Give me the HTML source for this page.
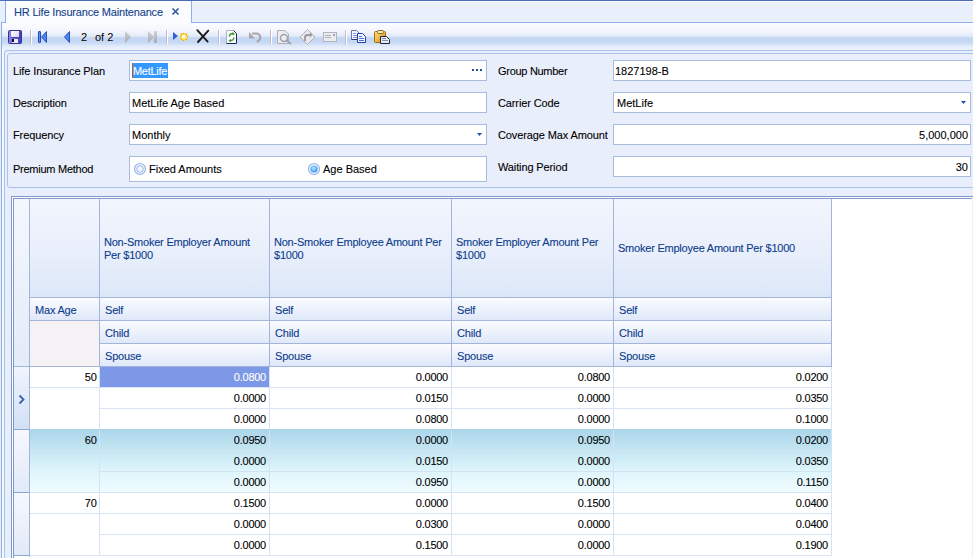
<!DOCTYPE html>
<html><head><meta charset="utf-8">
<style>
*{box-sizing:border-box;margin:0;padding:0}
html,body{width:973px;height:558px;overflow:hidden;background:#e6edfa;font-family:"Liberation Sans",sans-serif;font-size:11px;color:#000;position:relative}
.a{position:absolute}
.t{position:absolute;white-space:nowrap;line-height:13px;-webkit-text-stroke-width:0.1px}
.lb{letter-spacing:-0.12px}
.hl{position:absolute;height:1px}
.vl{position:absolute;width:1px}
.tb{position:absolute;background:#fff;border:1px solid #a9bbdd}
</style></head><body>
<!-- top dark line -->
<div class="hl" style="left:0;top:0;width:973px;height:1px;background:#4a6cb8"></div>
<!-- tab strip bg -->
<div class="a" style="left:0;top:1px;width:973px;height:21px;background:#eaeffc"></div>
<div class="hl" style="left:0;top:1px;width:973px;background:#f8faff"></div>
<div class="hl" style="left:1px;top:22px;width:972px;background:#8cb0ea"></div>
<!-- tab -->
<div class="a" style="left:5px;top:1px;width:187px;height:22px;background:#fbfcff;border-left:1px solid #8cb0ea;border-right:1px solid #8cb0ea"></div>
<div class="t" style="left:14px;top:6px;color:#15428b;letter-spacing:-0.18px">HR Life Insurance Maintenance</div>
<svg class="a" style="left:171px;top:7px" width="10" height="9"><path d="M1.5 1.5 L7.5 7.5 M7.5 1.5 L1.5 7.5" stroke="#2d55a8" stroke-width="1.6"/></svg>
<!-- content left border -->
<div class="vl" style="left:1px;top:22px;height:536px;background:#8cb0ea"></div>
<div class="a" style="left:2px;top:23px;width:971px;height:535px;background:#e8eefb"></div>
<div class="a" style="left:2px;top:50px;width:2px;height:508px;background:#f6f9ff"></div>
<!-- toolbar -->
<div class="a" style="left:2px;top:23px;width:971px;height:27px;background:linear-gradient(#fcfdff 0px,#f4f7fd 7px,#e4ebf8 13px,#c2d5f3 15px,#c8daf5 20px,#e2ebfa 23px,#eef3fd 27px)"></div>
<!-- toolbar icons -->
<svg class="a" style="left:0;top:0" width="400" height="50" viewBox="0 0 400 50">
<defs>
<linearGradient id="gblue" x1="0" y1="0" x2="0" y2="1"><stop offset="0" stop-color="#6aa0f5"/><stop offset="1" stop-color="#1f4fc0"/></linearGradient>
<linearGradient id="ggray" x1="0" y1="0" x2="0" y2="1"><stop offset="0" stop-color="#d0d0d6"/><stop offset="1" stop-color="#a9a9b2"/></linearGradient>
<linearGradient id="gfl" x1="0" y1="0" x2="1" y2="1"><stop offset="0" stop-color="#fff"/><stop offset="1" stop-color="#d8d0f0"/></linearGradient>
<linearGradient id="gpaste" x1="0" y1="0" x2="1" y2="1"><stop offset="0" stop-color="#ffe680"/><stop offset="1" stop-color="#d08a10"/></linearGradient>
</defs>
<!-- save -->
<linearGradient id="gsave" x1="0" y1="0" x2="1" y2="0"><stop offset="0" stop-color="#8c86e8"/><stop offset="1" stop-color="#3c3cb0"/></linearGradient>
<rect x="8.5" y="30.5" width="13" height="13" rx="1" fill="url(#gsave)" stroke="#34339a"/>
<rect x="11" y="31" width="8" height="6" fill="url(#gfl)"/>
<rect x="11" y="37" width="8" height="1" fill="#4a48b8"/>
<rect x="12" y="39" width="6" height="4" fill="#e8e8f8"/>
<rect x="12" y="39" width="2" height="3" fill="#111"/>
<!-- separators -->
<g fill="#c6b9c9"><rect x="30" y="30" width="1" height="15"/><rect x="166" y="30" width="1" height="15"/><rect x="218" y="30" width="1" height="15"/><rect x="270" y="30" width="1" height="15"/><rect x="345" y="30" width="1" height="15"/></g>
<g fill="#ffffff"><rect x="31" y="30" width="1" height="15"/><rect x="167" y="30" width="1" height="15"/><rect x="219" y="30" width="1" height="15"/><rect x="271" y="30" width="1" height="15"/><rect x="346" y="30" width="1" height="15"/></g>
<!-- first -->
<rect x="38.5" y="31.5" width="2" height="11" rx="0.5" fill="#5d93f0" stroke="#1f48b8"/>
<polygon points="46.5,31.5 41.5,37 46.5,42.5" fill="#4a86ee" stroke="#1f48b8" stroke-width="0.9"/>
<!-- prev -->
<polygon points="69.5,31.5 64.5,37 69.5,42.5" fill="#4a86ee" stroke="#1f48b8" stroke-width="0.9"/>
<!-- next -->
<polygon points="125,31 131,37 125,43" fill="url(#ggray)"/>
<!-- last -->
<polygon points="148,31 154,37 148,43" fill="url(#ggray)"/>
<rect x="154" y="31" width="3" height="12" rx="1" fill="url(#ggray)"/>
<!-- new -->
<polygon points="173,32 178,36 173,40" fill="#2f62d8"/>
<rect x="180" y="33" width="7.5" height="7.5" rx="2" fill="#f6d84a"/>
<circle cx="183.7" cy="36.7" r="2" fill="#fffbe0"/>
<g fill="#e89a20"><rect x="181" y="34" width="1" height="1"/><rect x="186" y="34" width="1" height="1"/><rect x="181" y="39" width="1" height="1"/><rect x="186" y="39" width="1" height="1"/><rect x="183" y="33" width="1" height="1"/><rect x="180" y="36" width="1" height="1"/><rect x="187" y="36" width="1" height="1"/><rect x="183" y="40" width="1" height="1"/></g>
<!-- delete X -->
<path d="M197.3 30.2 L207.6 41.6 M208.3 30.6 L198 42" stroke="#1a1a1a" stroke-width="1.9" stroke-linecap="round"/>
<!-- refresh doc -->
<path d="M226.5 30.5 H233.5 L236.5 33.5 V43.5 H226.5 Z" fill="#fbfbff"/>
<path d="M226.5 43.5 V30.5 H233.5" stroke="#aab2c6" fill="none"/>
<path d="M233.5 30.5 L236.5 33.5 V43.5 H226.5" stroke="#23264a" fill="none"/>
<path d="M229.2 36.5 Q230 33.2 233.5 33.6" stroke="#3c9a28" stroke-width="1.4" fill="none"/>
<polygon points="232.5,32 235,34 232.5,35.5" fill="#3c9a28"/>
<path d="M234 37.5 Q233.5 40.8 230 40.6" stroke="#3c9a28" stroke-width="1.4" fill="none"/>
<polygon points="231,39 228.5,40.6 231,42.2" fill="#3c9a28"/>
<!-- undo gray -->
<path d="M252 33.5 H256 A3.6 3.6 0 0 1 256.5 41.5" stroke="#aaa4ae" stroke-width="2.2" fill="none"/>
<polygon points="249,32 249,38.5 255,38.5" fill="#aaa4ae"/>
<!-- preview gray -->
<path d="M277.5 30.5 H285 L288.5 34 V43.5 H277.5 Z" fill="#ececf0" stroke="#b0b0b8"/>
<circle cx="284" cy="38" r="3.5" fill="none" stroke="#a0a0aa" stroke-width="1.5"/>
<path d="M286.5 40.5 L291 44" stroke="#a0a0aa" stroke-width="2"/>
<!-- diamond gray -->
<polygon points="307.5,29.5 315,37 307.5,44.5 300,37" fill="#e8e8ec" stroke="#b2b2ba"/>
<path d="M305 41 V37.5 A2.5 2.5 0 0 1 307.5 35 H310" stroke="#9a9aa4" stroke-width="1.8" fill="none"/>
<polygon points="310,32.5 312.5,35 310,37.5" fill="#9a9aa4"/>
<!-- card gray -->
<rect x="323.5" y="32.5" width="13" height="9" fill="#ebebef" stroke="#b4b4bc"/>
<rect x="325" y="35" width="6" height="1" fill="#b0b0b8"/><rect x="325" y="37" width="6" height="1" fill="#b0b0b8"/>
<rect x="333" y="34" width="2" height="2" fill="#b89aa8"/>
<!-- copy -->
<path d="M351.5 30.5 H356.5 L359 33 V39.5 H351.5 Z" fill="#f6f8ff" stroke="#6a7aa8"/>
<path d="M351.5 39.5 H359" stroke="#2a3470"/>
<g fill="#7e9ae0"><rect x="353" y="33" width="3" height="1"/><rect x="353" y="35" width="5" height="1"/><rect x="353" y="37" width="5" height="1"/></g>
<path d="M357.5 33.5 H362.5 L365.5 36.5 V42.5 H357.5 Z" fill="#f4f6ff" stroke="#2240b0"/>
<g fill="#4a72d8"><rect x="359" y="36" width="3" height="1"/><rect x="359" y="38" width="5" height="1"/><rect x="359" y="40" width="5" height="1"/></g>
<!-- paste -->
<rect x="374.5" y="31.5" width="11" height="11" rx="1" fill="url(#gpaste)" stroke="#a07010"/>
<rect x="377.5" y="30.5" width="6" height="3" rx="1" fill="#f8eab0" stroke="#80581a" stroke-width="0.9"/>
<path d="M380.5 36.5 H386.5 L389.5 39.5 V43.5 H380.5 Z" fill="#e8eaf2" stroke="#262636"/>
<g fill="#8090b8"><rect x="382" y="38" width="4" height="1"/><rect x="382" y="40" width="6" height="1"/></g>
</svg>
<div class="t" style="left:81px;top:31px;-webkit-text-stroke-width:0">2</div>
<div class="t" style="left:95px;top:31px;-webkit-text-stroke-width:0">of 2</div>

<!-- outer panel -->
<div class="a" style="left:4px;top:50px;width:980px;height:520px;border:1px solid #a9c1ea;border-radius:3px;background:#e8eefb"></div>
<!-- inner form panel -->
<div class="a" style="left:7px;top:53px;width:980px;height:135px;border:1px solid #a9c1ea;border-radius:3px;background:#e9eefb"></div>

<!-- form labels -->
<div class="t lb" style="left:13px;top:65px">Life Insurance Plan</div>
<div class="t lb" style="left:13px;top:97px">Description</div>
<div class="t lb" style="left:13px;top:129px">Frequency</div>
<div class="t" style="left:13px;top:163px;letter-spacing:-0.26px">Premium Method</div>
<div class="t" style="left:498px;top:65px;letter-spacing:-0.29px">Group Number</div>
<div class="t lb" style="left:498px;top:97px">Carrier Code</div>
<div class="t lb" style="left:498px;top:129px">Coverage Max Amount</div>
<div class="t lb" style="left:498px;top:161px">Waiting Period</div>

<!-- textboxes -->
<div class="tb" style="left:129px;top:60px;width:358px;height:21px"></div>
<div class="a" style="left:132px;top:63px;width:36px;height:15px;background:#3399ff"></div>
<div class="t" style="left:133px;top:65px;color:#fff;letter-spacing:-0.3px">MetLife</div>
<div class="a" style="left:132px;top:63px;width:1px;height:15px;background:#c8502a"></div>
<div class="a" style="left:472px;top:69px;width:2px;height:2px;background:#1f4fa8"></div><div class="a" style="left:476px;top:69px;width:2px;height:2px;background:#1f4fa8"></div><div class="a" style="left:480px;top:69px;width:2px;height:2px;background:#1f4fa8"></div>
<div class="tb" style="left:129px;top:92px;width:358px;height:21px"></div>
<div class="t" style="left:132px;top:97px">MetLife Age Based</div>
<div class="tb" style="left:129px;top:124px;width:358px;height:21px"></div>
<div class="t" style="left:132px;top:129px">Monthly</div>
<svg class="a" style="left:477px;top:133px" width="6" height="4"><polygon points="0,0 5,0 2.5,3" fill="#1f4fa8"/></svg>
<div class="tb" style="left:129px;top:156px;width:358px;height:26px"></div>
<svg class="a" style="left:133px;top:162px" width="14" height="14"><circle cx="7" cy="7" r="5.5" fill="#f4f4ff" stroke="#8fb2ec" stroke-width="1.2"/><circle cx="7" cy="7" r="3.3" fill="none" stroke="#9ab9ee" stroke-width="1"/></svg>
<svg class="a" style="left:307px;top:162px" width="14" height="14"><defs><radialGradient id="rg" cx="0.45" cy="0.4" r="0.6"><stop offset="0" stop-color="#b8ecff"/><stop offset="1" stop-color="#2f8ff0"/></radialGradient></defs><circle cx="7" cy="7" r="5.5" fill="#eef4ff" stroke="#8fb2ec" stroke-width="1.2"/><circle cx="7" cy="7" r="3.6" fill="url(#rg)"/></svg>
<div class="t" style="left:149px;top:163px">Fixed Amounts</div>
<div class="t" style="left:323px;top:163px">Age Based</div>

<div class="tb" style="left:613px;top:60px;width:358px;height:21px"></div>
<div class="t" style="left:615px;top:65px">1827198-B</div>
<div class="tb" style="left:613px;top:92px;width:358px;height:21px"></div>
<div class="t" style="left:617px;top:97px">MetLife</div>
<svg class="a" style="left:961px;top:101px" width="6" height="4"><polygon points="0,0 5,0 2.5,3" fill="#1f4fa8"/></svg>
<div class="tb" style="left:613px;top:124px;width:358px;height:21px"></div>
<div class="t" style="left:880px;top:129px;width:88px;text-align:right">5,000,000</div>
<div class="tb" style="left:613px;top:156px;width:358px;height:21px"></div>
<div class="t" style="left:880px;top:161px;width:88px;text-align:right">30</div>

<!-- grid -->
<div class="a" style="left:11px;top:196px;width:980px;height:380px;border:1px solid #7f9ac8;background:#fff"></div>
<div class="a" style="left:13px;top:198px;width:980px;height:380px;border-left:1px solid #7f9ac8;border-top:1px solid #7f9ac8"></div>
<div class="a" style="left:14px;top:199px;width:15px;height:168px;background:linear-gradient(#f4f7fd,#e4ebf9)"></div>
<div class="vl" style="left:29px;top:199px;height:358px;background:#a3b6da"></div>
<div class="a" style="left:30px;top:199px;width:69px;height:98px;background:linear-gradient(#f2f5fd,#e9effb 55%,#dbe7f8)"></div>
<div class="vl" style="left:99px;top:199px;height:168px;background:#a3b6da"></div>
<div class="a" style="left:100px;top:199px;width:169px;height:98px;background:linear-gradient(#f2f5fd,#e9effb 55%,#dbe7f8)"></div>
<div class="vl" style="left:269px;top:199px;height:168px;background:#a3b6da"></div>
<div class="a" style="left:270px;top:199px;width:181px;height:98px;background:linear-gradient(#f2f5fd,#e9effb 55%,#dbe7f8)"></div>
<div class="vl" style="left:451px;top:199px;height:168px;background:#a3b6da"></div>
<div class="a" style="left:452px;top:199px;width:161px;height:98px;background:linear-gradient(#f2f5fd,#e9effb 55%,#dbe7f8)"></div>
<div class="vl" style="left:613px;top:199px;height:168px;background:#a3b6da"></div>
<div class="a" style="left:614px;top:199px;width:217px;height:98px;background:linear-gradient(#f2f5fd,#e9effb 55%,#dbe7f8)"></div>
<div class="vl" style="left:831px;top:199px;height:168px;background:#a3b6da"></div>
<div class="hl" style="left:30px;top:297px;width:801px;background:#a3b6da"></div>
<div class="a" style="left:100px;top:298px;width:169px;height:22px;background:linear-gradient(#fafbff,#dfe8f9)"></div>
<div class="t" style="left:105px;top:304px;color:#0c3c8c;letter-spacing:-0.2px">Self</div>
<div class="a" style="left:270px;top:298px;width:181px;height:22px;background:linear-gradient(#fafbff,#dfe8f9)"></div>
<div class="t" style="left:275px;top:304px;color:#0c3c8c;letter-spacing:-0.2px">Self</div>
<div class="a" style="left:452px;top:298px;width:161px;height:22px;background:linear-gradient(#fafbff,#dfe8f9)"></div>
<div class="t" style="left:457px;top:304px;color:#0c3c8c;letter-spacing:-0.2px">Self</div>
<div class="a" style="left:614px;top:298px;width:217px;height:22px;background:linear-gradient(#fafbff,#dfe8f9)"></div>
<div class="t" style="left:619px;top:304px;color:#0c3c8c;letter-spacing:-0.2px">Self</div>
<div class="hl" style="left:100px;top:320px;width:731px;background:#a3b6da"></div>
<div class="a" style="left:100px;top:321px;width:169px;height:22px;background:linear-gradient(#fafbff,#dfe8f9)"></div>
<div class="t" style="left:105px;top:327px;color:#0c3c8c;letter-spacing:-0.2px">Child</div>
<div class="a" style="left:270px;top:321px;width:181px;height:22px;background:linear-gradient(#fafbff,#dfe8f9)"></div>
<div class="t" style="left:275px;top:327px;color:#0c3c8c;letter-spacing:-0.2px">Child</div>
<div class="a" style="left:452px;top:321px;width:161px;height:22px;background:linear-gradient(#fafbff,#dfe8f9)"></div>
<div class="t" style="left:457px;top:327px;color:#0c3c8c;letter-spacing:-0.2px">Child</div>
<div class="a" style="left:614px;top:321px;width:217px;height:22px;background:linear-gradient(#fafbff,#dfe8f9)"></div>
<div class="t" style="left:619px;top:327px;color:#0c3c8c;letter-spacing:-0.2px">Child</div>
<div class="hl" style="left:100px;top:343px;width:731px;background:#a3b6da"></div>
<div class="a" style="left:100px;top:344px;width:169px;height:22px;background:linear-gradient(#fafbff,#dfe8f9)"></div>
<div class="t" style="left:105px;top:350px;color:#0c3c8c;letter-spacing:-0.2px">Spouse</div>
<div class="a" style="left:270px;top:344px;width:181px;height:22px;background:linear-gradient(#fafbff,#dfe8f9)"></div>
<div class="t" style="left:275px;top:350px;color:#0c3c8c;letter-spacing:-0.2px">Spouse</div>
<div class="a" style="left:452px;top:344px;width:161px;height:22px;background:linear-gradient(#fafbff,#dfe8f9)"></div>
<div class="t" style="left:457px;top:350px;color:#0c3c8c;letter-spacing:-0.2px">Spouse</div>
<div class="a" style="left:614px;top:344px;width:217px;height:22px;background:linear-gradient(#fafbff,#dfe8f9)"></div>
<div class="t" style="left:619px;top:350px;color:#0c3c8c;letter-spacing:-0.2px">Spouse</div>
<div class="hl" style="left:100px;top:366px;width:731px;background:#a3b6da"></div>
<div class="a" style="left:30px;top:298px;width:69px;height:22px;background:linear-gradient(#fafbff,#dfe8f9)"></div>
<div class="t" style="left:35px;top:304px;color:#0c3c8c;letter-spacing:-0.2px">Max Age</div>
<div class="hl" style="left:30px;top:320px;width:69px;background:#a3b6da"></div>
<div class="a" style="left:30px;top:321px;width:69px;height:45px;background:#f5f1f5"></div>
<div class="hl" style="left:14px;top:366px;width:817px;background:#a3b6da"></div>
<div class="t" style="left:104px;top:236px;color:#0c3c8c;letter-spacing:-0.22px">Non-Smoker Employer Amount<br>Per $1000</div>
<div class="t" style="left:274px;top:236px;color:#0c3c8c;letter-spacing:-0.22px">Non-Smoker Employee Amount Per<br>$1000</div>
<div class="t" style="left:456px;top:236px;color:#0c3c8c;letter-spacing:-0.22px">Smoker Employer Amount Per<br>$1000</div>
<div class="t" style="left:618px;top:242px;color:#0c3c8c;letter-spacing:-0.22px">Smoker Employee Amount Per $1000</div>
<div class="a" style="left:14px;top:367px;width:15px;height:62px;background:linear-gradient(#f0f5fd,#d2dff5)"></div>
<div class="hl" style="left:14px;top:429px;width:15px;background:#8aa6d6"></div>
<div class="hl" style="left:100px;top:387px;width:731px;background:#dae4f6"></div>
<div class="a" style="left:100px;top:367px;width:169px;height:20px;background:#7d98e6"></div>
<div class="t" style="left:100px;top:371px;width:166px;text-align:right;color:#fff;letter-spacing:-0.25px">0.0800</div>
<div class="t" style="left:270px;top:371px;width:178px;text-align:right;color:#000;letter-spacing:-0.25px">0.0000</div>
<div class="t" style="left:452px;top:371px;width:158px;text-align:right;color:#000;letter-spacing:-0.25px">0.0800</div>
<div class="t" style="left:614px;top:371px;width:214px;text-align:right;color:#000;letter-spacing:-0.25px">0.0200</div>
<div class="hl" style="left:100px;top:408px;width:731px;background:#dae4f6"></div>
<div class="t" style="left:100px;top:392px;width:166px;text-align:right;color:#000;letter-spacing:-0.25px">0.0000</div>
<div class="t" style="left:270px;top:392px;width:178px;text-align:right;color:#000;letter-spacing:-0.25px">0.0150</div>
<div class="t" style="left:452px;top:392px;width:158px;text-align:right;color:#000;letter-spacing:-0.25px">0.0000</div>
<div class="t" style="left:614px;top:392px;width:214px;text-align:right;color:#000;letter-spacing:-0.25px">0.0350</div>
<div class="hl" style="left:30px;top:429px;width:801px;background:#dae4f6"></div>
<div class="t" style="left:100px;top:413px;width:166px;text-align:right;color:#000;letter-spacing:-0.25px">0.0000</div>
<div class="t" style="left:270px;top:413px;width:178px;text-align:right;color:#000;letter-spacing:-0.25px">0.0800</div>
<div class="t" style="left:452px;top:413px;width:158px;text-align:right;color:#000;letter-spacing:-0.25px">0.0000</div>
<div class="t" style="left:614px;top:413px;width:214px;text-align:right;color:#000;letter-spacing:-0.25px">0.1000</div>
<div class="hl" style="left:30px;top:387px;width:69px;background:#d6e2f5"></div>
<div class="t" style="left:30px;top:371px;width:67px;text-align:right">50</div>
<div class="vl" style="left:99px;top:367px;height:63px;background:#d6e2f5"></div>
<div class="vl" style="left:269px;top:367px;height:63px;background:#d6e2f5"></div>
<div class="vl" style="left:451px;top:367px;height:63px;background:#d6e2f5"></div>
<div class="vl" style="left:613px;top:367px;height:63px;background:#d6e2f5"></div>
<div class="vl" style="left:831px;top:367px;height:63px;background:#d6e2f5"></div>
<div class="a" style="left:14px;top:430px;width:15px;height:62px;background:linear-gradient(#f6f8fe,#e2e9f8)"></div>
<div class="hl" style="left:14px;top:492px;width:15px;background:#8aa6d6"></div>
<div class="a" style="left:30px;top:429px;width:801px;height:64px;background:linear-gradient(#abd5ea 0%,#c6e7f3 35%,#def5fb 65%,#f0fcff 100%)"></div>
<div class="hl" style="left:100px;top:450px;width:731px;background:#d2e4f2"></div>
<div class="t" style="left:100px;top:434px;width:166px;text-align:right;color:#000;letter-spacing:-0.25px">0.0950</div>
<div class="t" style="left:270px;top:434px;width:178px;text-align:right;color:#000;letter-spacing:-0.25px">0.0000</div>
<div class="t" style="left:452px;top:434px;width:158px;text-align:right;color:#000;letter-spacing:-0.25px">0.0950</div>
<div class="t" style="left:614px;top:434px;width:214px;text-align:right;color:#000;letter-spacing:-0.25px">0.0200</div>
<div class="hl" style="left:100px;top:471px;width:731px;background:#d2e4f2"></div>
<div class="t" style="left:100px;top:455px;width:166px;text-align:right;color:#000;letter-spacing:-0.25px">0.0000</div>
<div class="t" style="left:270px;top:455px;width:178px;text-align:right;color:#000;letter-spacing:-0.25px">0.0150</div>
<div class="t" style="left:452px;top:455px;width:158px;text-align:right;color:#000;letter-spacing:-0.25px">0.0000</div>
<div class="t" style="left:614px;top:455px;width:214px;text-align:right;color:#000;letter-spacing:-0.25px">0.0350</div>
<div class="hl" style="left:30px;top:492px;width:801px;background:#d2e4f2"></div>
<div class="t" style="left:100px;top:476px;width:166px;text-align:right;color:#000;letter-spacing:-0.25px">0.0000</div>
<div class="t" style="left:270px;top:476px;width:178px;text-align:right;color:#000;letter-spacing:-0.25px">0.0950</div>
<div class="t" style="left:452px;top:476px;width:158px;text-align:right;color:#000;letter-spacing:-0.25px">0.0000</div>
<div class="t" style="left:614px;top:476px;width:214px;text-align:right;color:#000;letter-spacing:-0.25px">0.1150</div>
<div class="hl" style="left:30px;top:450px;width:69px;background:#d6e2f5"></div>
<div class="t" style="left:30px;top:434px;width:67px;text-align:right">60</div>
<div class="vl" style="left:99px;top:430px;height:63px;background:#d6e2f5"></div>
<div class="vl" style="left:269px;top:430px;height:63px;background:#d6e2f5"></div>
<div class="vl" style="left:451px;top:430px;height:63px;background:#d6e2f5"></div>
<div class="vl" style="left:613px;top:430px;height:63px;background:#d6e2f5"></div>
<div class="vl" style="left:831px;top:430px;height:63px;background:#d6e2f5"></div>
<div class="a" style="left:14px;top:493px;width:15px;height:62px;background:linear-gradient(#f6f8fe,#e2e9f8)"></div>
<div class="hl" style="left:14px;top:555px;width:15px;background:#8aa6d6"></div>
<div class="hl" style="left:100px;top:513px;width:731px;background:#dae4f6"></div>
<div class="t" style="left:100px;top:497px;width:166px;text-align:right;color:#000;letter-spacing:-0.25px">0.1500</div>
<div class="t" style="left:270px;top:497px;width:178px;text-align:right;color:#000;letter-spacing:-0.25px">0.0000</div>
<div class="t" style="left:452px;top:497px;width:158px;text-align:right;color:#000;letter-spacing:-0.25px">0.1500</div>
<div class="t" style="left:614px;top:497px;width:214px;text-align:right;color:#000;letter-spacing:-0.25px">0.0400</div>
<div class="hl" style="left:100px;top:534px;width:731px;background:#dae4f6"></div>
<div class="t" style="left:100px;top:518px;width:166px;text-align:right;color:#000;letter-spacing:-0.25px">0.0000</div>
<div class="t" style="left:270px;top:518px;width:178px;text-align:right;color:#000;letter-spacing:-0.25px">0.0300</div>
<div class="t" style="left:452px;top:518px;width:158px;text-align:right;color:#000;letter-spacing:-0.25px">0.0000</div>
<div class="t" style="left:614px;top:518px;width:214px;text-align:right;color:#000;letter-spacing:-0.25px">0.0400</div>
<div class="hl" style="left:30px;top:555px;width:801px;background:#dae4f6"></div>
<div class="t" style="left:100px;top:539px;width:166px;text-align:right;color:#000;letter-spacing:-0.25px">0.0000</div>
<div class="t" style="left:270px;top:539px;width:178px;text-align:right;color:#000;letter-spacing:-0.25px">0.1500</div>
<div class="t" style="left:452px;top:539px;width:158px;text-align:right;color:#000;letter-spacing:-0.25px">0.0000</div>
<div class="t" style="left:614px;top:539px;width:214px;text-align:right;color:#000;letter-spacing:-0.25px">0.1900</div>
<div class="hl" style="left:30px;top:513px;width:69px;background:#d6e2f5"></div>
<div class="t" style="left:30px;top:497px;width:67px;text-align:right">70</div>
<div class="vl" style="left:99px;top:493px;height:63px;background:#d6e2f5"></div>
<div class="vl" style="left:269px;top:493px;height:63px;background:#d6e2f5"></div>
<div class="vl" style="left:451px;top:493px;height:63px;background:#d6e2f5"></div>
<div class="vl" style="left:613px;top:493px;height:63px;background:#d6e2f5"></div>
<div class="vl" style="left:831px;top:493px;height:63px;background:#d6e2f5"></div>
<svg class="a" style="left:17px;top:394px" width="10" height="12"><path d="M2.5 1.5 L6.5 5.5 L2.5 9.5" stroke="#3d64a8" stroke-width="1.8" fill="none"/></svg>
<div class="vl" style="left:972px;top:197px;height:361px;background:#eef1f8"></div>
</body></html>
